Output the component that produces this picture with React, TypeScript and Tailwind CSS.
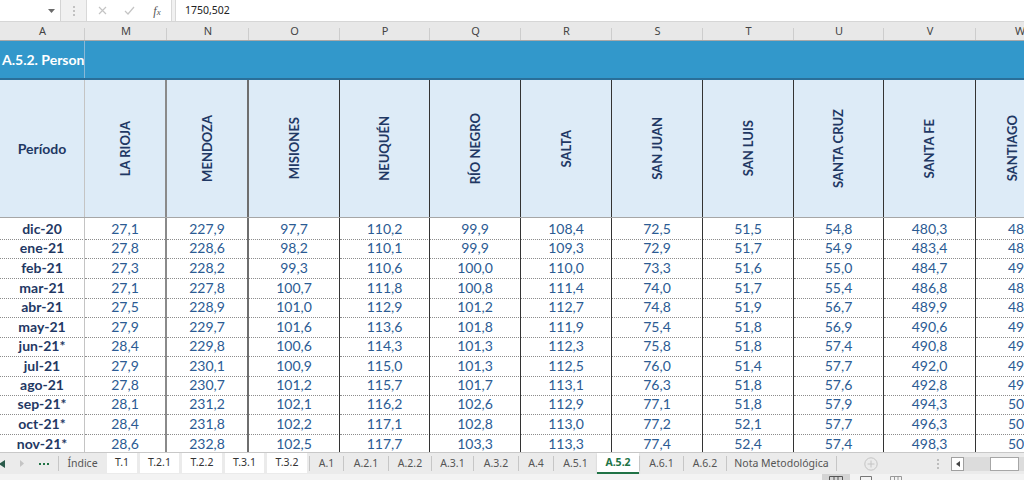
import React from "react";

type Col = { letter: string; name?: string; b: string };

const cols: Col[] = [
  { letter: "A", b: "border-r border-r-[#c4c4c4]" },
  { letter: "M", name: "LA RIOJA", b: "border-r-2 border-r-[#8a8a8a]" },
  { letter: "N", name: "MENDOZA", b: "border-r-2 border-r-[#6e6e6e]" },
  { letter: "O", name: "MISIONES", b: "border-r border-r-[#333333]" },
  { letter: "P", name: "NEUQUÉN", b: "border-r border-r-[#333333]" },
  { letter: "Q", name: "RÍO NEGRO", b: "border-r border-r-[#333333]" },
  { letter: "R", name: "SALTA", b: "border-r border-r-[#333333]" },
  { letter: "S", name: "SAN JUAN", b: "border-r border-r-[#333333]" },
  { letter: "T", name: "SAN LUIS", b: "border-r border-r-[#333333]" },
  { letter: "U", name: "SANTA CRUZ", b: "border-r border-r-[#333333]" },
  { letter: "V", name: "SANTA FE", b: "border-r border-r-[#333333]" },
  { letter: "W", name: "SANTIAGO", b: "" },
];

const GRID =
  "grid grid-cols-[85px_82px_82px_91px_90px_91px_91px_91px_91px_90px_92px_88px] w-[1064px]";

const rows: string[][] = [
  ["dic-20", "27,1", "227,9", "97,7", "110,2", "99,9", "108,4", "72,5", "51,5", "54,8", "480,3", "48"],
  ["ene-21", "27,8", "228,6", "98,2", "110,1", "99,9", "109,3", "72,9", "51,7", "54,9", "483,4", "48"],
  ["feb-21", "27,3", "228,2", "99,3", "110,6", "100,0", "110,0", "73,3", "51,6", "55,0", "484,7", "49"],
  ["mar-21", "27,1", "227,8", "100,7", "111,8", "100,8", "111,4", "74,0", "51,7", "55,4", "486,8", "48"],
  ["abr-21", "27,5", "228,9", "101,0", "112,9", "101,2", "112,7", "74,8", "51,9", "56,7", "489,9", "48"],
  ["may-21", "27,9", "229,7", "101,6", "113,6", "101,8", "111,9", "75,4", "51,8", "56,9", "490,6", "49"],
  ["jun-21*", "28,4", "229,8", "100,6", "114,3", "101,3", "112,3", "75,8", "51,8", "57,4", "490,8", "49"],
  ["jul-21", "27,9", "230,1", "100,9", "115,0", "101,3", "112,5", "76,0", "51,4", "57,7", "492,0", "49"],
  ["ago-21", "27,8", "230,7", "101,2", "115,7", "101,7", "113,1", "76,3", "51,8", "57,6", "492,8", "49"],
  ["sep-21*", "28,1", "231,2", "102,1", "116,2", "102,6", "112,9", "77,1", "51,8", "57,9", "494,3", "50"],
  ["oct-21*", "28,4", "231,8", "102,2", "117,1", "102,8", "113,0", "77,2", "52,1", "57,7", "496,3", "50"],
  ["nov-21*", "28,6", "232,8", "102,5", "117,7", "103,3", "113,3", "77,4", "52,4", "57,4", "498,3", "50"],
];

const rowH = [
  "h-[19px]", "h-[20px]", "h-[20px]", "h-[19px]", "h-[20px]", "h-[19px]",
  "h-[20px]", "h-[19px]", "h-[19px]", "h-[20px]", "h-[20px]", "h-[19px]",
];

type Tab = { l: string; w: string; k: "gray" | "white" | "active" };
const tabs: Tab[] = [
  { l: "Índice", w: "w-[48px]", k: "gray" },
  { l: "T.1", w: "w-[33px]", k: "white" },
  { l: "T.2.1", w: "w-[42px]", k: "white" },
  { l: "T.2.2", w: "w-[43px]", k: "white" },
  { l: "T.3.1", w: "w-[42px]", k: "white" },
  { l: "T.3.2", w: "w-[43px]", k: "white" },
  { l: "A.1", w: "w-[34px]", k: "gray" },
  { l: "A.2.1", w: "w-[45px]", k: "gray" },
  { l: "A.2.2", w: "w-[43px]", k: "gray" },
  { l: "A.3.1", w: "w-[42px]", k: "gray" },
  { l: "A.3.2", w: "w-[45px]", k: "gray" },
  { l: "A.4", w: "w-[35px]", k: "gray" },
  { l: "A.5.1", w: "w-[44px]", k: "gray" },
  { l: "A.5.2", w: "w-[42px]", k: "active" },
  { l: "A.6.1", w: "w-[44px]", k: "gray" },
  { l: "A.6.2", w: "w-[43px]", k: "gray" },
  { l: "Nota Metodológica", w: "w-[111px]", k: "gray" },
];

function FormulaBar() {
  return (
    <div className="h-[22px] flex items-stretch bg-[#f1f1f1] border-b border-b-[#d6d6d6] font-['Noto_Sans',sans-serif]">
      <div className="w-[61px] bg-white border-r border-r-[#d4d4d4] flex items-center justify-end pr-[5px]">
        <svg width="7" height="4" viewBox="0 0 7 4">
          <path d="M0 0 L7 0 L3.5 4 Z" fill="#6b6b6b" />
        </svg>
      </div>
      <div className="w-[25px] flex items-center justify-center">
        <svg width="2" height="10" viewBox="0 0 2 10">
          <rect x="0" y="0" width="2" height="2" fill="#c2c2c2" />
          <rect x="0" y="4" width="2" height="2" fill="#c2c2c2" />
          <rect x="0" y="8" width="2" height="2" fill="#c2c2c2" />
        </svg>
      </div>
      <div className="w-[86px] bg-white border-x border-x-[#d8d8d8] flex items-center">
        <div className="w-[28px] flex justify-center pl-[2px]">
          <svg width="9" height="9" viewBox="0 0 9 9">
            <path d="M1 1 L8 8 M8 1 L1 8" stroke="#c4c4c4" strokeWidth="1.2" />
          </svg>
        </div>
        <div className="w-[28px] flex justify-center">
          <svg width="11" height="9" viewBox="0 0 11 9">
            <path d="M1 5 L4 8 L10 1" stroke="#c4c4c4" strokeWidth="1.2" fill="none" />
          </svg>
        </div>
        <div className="w-[28px] flex justify-center">
          <span className="font-['Liberation_Serif',serif] italic text-[12px] text-[#555] leading-none">
            f<span className="text-[9px]">x</span>
          </span>
        </div>
      </div>
      <div className="w-[3px]" />
      <div className="flex-1 bg-white border-l border-l-[#d8d8d8] flex items-center pl-[9px] text-[10.5px] text-[#222]">
        1750,502
      </div>
    </div>
  );
}

function ColumnHeaders() {
  return (
    <div className={`${GRID} h-[19px] bg-[#e8e8e8] border-b border-b-[#a8a8a8] font-['Noto_Sans',sans-serif]`}>
      {cols.map((c) => (
        <div
          key={c.letter}
          className="relative flex items-center justify-center text-[11px] text-[#444] after:absolute after:right-0 after:top-[6px] after:bottom-0 after:w-px after:bg-[#cdcdcd]"
        >
          {c.letter}
        </div>
      ))}
    </div>
  );
}

function Sheet() {
  return (
    <div className="flex-1 overflow-hidden font-['Lato',sans-serif]">
      {/* Blue title band */}
      <div className="flex h-[39px] w-[1064px] bg-[#3298cb] border-b-2 border-b-[#2a6f99]">
        <div className="w-[85px] border-r border-r-[#8ab8d6] flex items-center pl-[2px] overflow-hidden whitespace-nowrap">
          <span className="text-white font-bold text-[14px]">A.5.2. Person</span>
        </div>
        <div className="flex-1" />
      </div>
      {/* Header row */}
      <div className={`${GRID} h-[138px] bg-[#ddebf7] border-b border-b-[#a6a6a6]`}>
        {cols.map((c, i) => (
          <div key={c.letter} className={`${c.b} flex items-center justify-center ${i === 11 ? "pr-[16px]" : ""}`}>
            {i === 0 ? (
              <span className="font-bold text-[14px] text-[#1f3864]">Período</span>
            ) : (
              <span className="[writing-mode:vertical-rl] rotate-180 font-bold text-[13px] text-[#1f3864] whitespace-nowrap leading-none">
                {c.name}
              </span>
            )}
          </div>
        ))}
      </div>
      {/* Data rows */}
      {rows.map((r, ri) => (
        <div key={r[0]} className={`${GRID} ${rowH[ri]}`}>
          {r.map((v, ci) => (
            <div
              key={ci}
              className={`${cols[ci].b} border-b [border-bottom-style:dotted] border-b-[#8c8c8c] flex items-center ${
                ci === 11 ? "justify-start pl-[32px]" : "justify-center"
              } ${ci === 0 ? "font-bold text-[#1f3864] text-[14px]" : "text-[#2b5b93] text-[14px]"}`}
            >
              {v}
            </div>
          ))}
        </div>
      ))}
    </div>
  );
}

function TabBar() {
  return (
    <div className="h-[22px] flex items-stretch bg-[#ebebeb] border-t border-t-[#c8c8c8] font-['Noto_Sans',sans-serif] text-[10.5px]">
      <div className="w-[58px] flex items-center">
        <div className="w-[14px] flex items-center pl-0">
          <svg width="6" height="8" viewBox="0 0 6 8" className="-ml-[1px]">
            <path d="M6 0 L0 4 L6 8 Z" fill="#2a5a4a" />
          </svg>
        </div>
        <div className="w-[16px] flex items-center justify-center">
          <svg width="4" height="7" viewBox="0 0 4 7">
            <path d="M0 0 L4 3.5 L0 7 Z" fill="#c4c4c4" />
          </svg>
        </div>
        <div className="w-[28px] flex items-center justify-center">
          <svg width="10" height="2" viewBox="0 0 10 2">
            <rect x="0" y="0" width="2" height="2" fill="#217346" />
            <rect x="4" y="0" width="2" height="2" fill="#217346" />
            <rect x="8" y="0" width="2" height="2" fill="#217346" />
          </svg>
        </div>
      </div>
      {tabs.map((t) => {
        if (t.k === "white")
          return (
            <div key={t.l} className={`${t.w} flex items-stretch pb-[1px]`}>
              <div className="flex-1 ml-[1px] mr-[2px] bg-white flex items-center justify-center text-[#333]">{t.l}</div>
            </div>
          );
        if (t.k === "active")
          return (
            <div
              key={t.l}
              className={`${t.w} bg-white border-b-2 border-b-[#217346] flex items-center justify-center text-[#217346] font-bold shadow-[0_1px_2px_rgba(0,0,0,0.15)]`}
            >
              {t.l}
            </div>
          );
        return (
          <div key={t.l} className={`${t.w} flex items-center`}>
            <div
              className={`h-[15px] w-full border-l border-l-[#c6c6c6] ${
                t.l === "Nota Metodológica" ? "border-r border-r-[#c6c6c6]" : ""
              } flex items-center justify-center text-[#555] whitespace-nowrap`}
            >
              {t.l}
            </div>
          </div>
        );
      })}
      <div className="w-[26px]" />
      <div className="w-[16px] flex items-center justify-center">
        <svg width="14" height="14" viewBox="0 0 14 14">
          <circle cx="7" cy="7" r="6.2" fill="none" stroke="#c4c4c4" strokeWidth="1" />
          <path d="M7 3.5 V10.5 M3.5 7 H10.5" stroke="#c4c4c4" strokeWidth="1" />
        </svg>
      </div>
      <div className="w-[51px]" />
      <div className="w-[16px] flex items-center justify-center">
        <svg width="2" height="10" viewBox="0 0 2 10">
          <rect x="0" y="0" width="2" height="2" fill="#bdbdbd" />
          <rect x="0" y="4" width="2" height="2" fill="#bdbdbd" />
          <rect x="0" y="8" width="2" height="2" fill="#bdbdbd" />
        </svg>
      </div>
      <div className="flex-1 flex items-center pl-[5px]">
        <div className="h-[14px] w-[13px] bg-white border border-[#a0a0a0] flex items-center justify-center">
          <svg width="4" height="6" viewBox="0 0 4 6">
            <path d="M4 0 L0 3 L4 6 Z" fill="#444" />
          </svg>
        </div>
        <div className="h-[14px] flex-1 bg-[#dcdcdc] flex items-center pl-[26px]">
          <div className="h-[14px] w-[29px] bg-white border border-[#a6a6a6]" />
        </div>
      </div>
    </div>
  );
}

function StatusBar() {
  return (
    <div className="h-[6px] flex bg-[#f3f3f3] overflow-hidden">
      <div className="w-[822px]" />
      <div className="w-[28px] h-full bg-[#d4d4d4] flex justify-center pt-[2px]">
        <svg width="14" height="4" viewBox="0 0 14 4">
          <path d="M0.5 4 V0.5 H13.5 V4 M5 0.5 V4 M9 0.5 V4" stroke="#555" fill="none" strokeWidth="1" />
        </svg>
      </div>
      <div className="w-[32px] flex justify-center pt-[2px]">
        <svg width="12" height="4" viewBox="0 0 12 4">
          <path d="M0.5 4 V0.5 H11.5 V4" stroke="#777" fill="none" strokeWidth="1" />
        </svg>
      </div>
      <div className="w-[28px] flex justify-center pt-[2px]">
        <svg width="12" height="4" viewBox="0 0 12 4">
          <path d="M0.5 4 V0.5 H11.5 V4 M4.5 0.5 V4 M8 0.5 V4" stroke="#999" fill="none" strokeWidth="1" />
        </svg>
      </div>
    </div>
  );
}

export default function App() {
  return (
    <div className="w-[1024px] h-[480px] overflow-hidden bg-white flex flex-col">
      <FormulaBar />
      <div className="overflow-hidden">
        <ColumnHeaders />
      </div>
      <Sheet />
      <TabBar />
      <StatusBar />
    </div>
  );
}
